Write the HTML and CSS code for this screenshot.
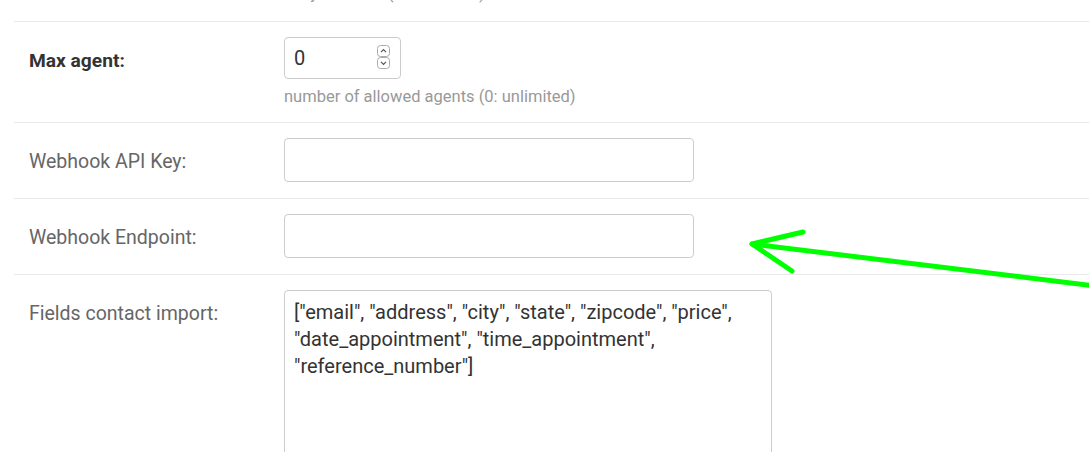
FILE: index.html
```html
<!DOCTYPE html>
<html>
<head>
<meta charset="utf-8">
<link rel="stylesheet" href="styles.css">
</head>
<body>
<div class="page">
  <div class="prev-help">daily call limit (0: unlimited)</div>
  <div class="form">
    <div class="row">
      <div class="label strong">Max agent:</div>
      <div class="field">
        <div class="num-wrap">
          <input class="input num" type="number" value="0">
          <svg class="spin" width="13" height="24" viewBox="0 0 13 24">
            <rect x="0.5" y="0.5" width="12" height="11" rx="3" fill="#fff" stroke="#aaa"/>
            <rect x="0.5" y="12.5" width="12" height="11" rx="3" fill="#fff" stroke="#aaa"/>
            <path d="M4 7.2 L6.5 4.7 L9 7.2" fill="none" stroke="#555" stroke-width="1.2"/>
            <path d="M4 16.8 L6.5 19.3 L9 16.8" fill="none" stroke="#555" stroke-width="1.2"/>
          </svg>
        </div>
        <div class="help">number of allowed agents (0: unlimited)</div>
      </div>
    </div>
    <div class="row">
      <div class="label">Webhook API Key:</div>
      <div class="field"><input class="input wide" type="text"></div>
    </div>
    <div class="row">
      <div class="label">Webhook Endpoint:</div>
      <div class="field"><input class="input wide" type="text"></div>
    </div>
    <div class="row">
      <div class="label">Fields contact import:</div>
      <div class="field"><textarea class="area">["email", "address", "city", "state", "zipcode", "price", "date_appointment", "time_appointment", "reference_number"]</textarea></div>
    </div>
  </div>
  <svg class="arrow" width="1089" height="452" viewBox="0 0 1089 452">
    <g fill="none" stroke="#00ff00" stroke-width="5" stroke-linecap="round" stroke-linejoin="round">
      <path d="M1095 286 L752 244"/>
      <path d="M803 232 L752 244 L792 271"/>
    </g>
  </svg>
</div>
</body>
</html>
```

FILE: styles.css
```css
* { box-sizing: border-box; }
html, body { margin: 0; padding: 0; background: #fff; overflow: hidden; }
body { font-family: Roboto, "Liberation Sans", sans-serif; }
.page { position: relative; width: 1089px; height: 452px; overflow: hidden; }
.prev-help {
  margin-left: 284px;
  margin-top: -16px;
  height: 37px;
  font-size: 16.5px;
  line-height: 20px;
  color: #999;
}
.form { margin-left: 14px; }
.row {
  display: flex;
  border-top: 1px solid #eaeaea;
  padding: 15px 0 16px 0;
}
.label {
  width: 270px;
  flex: none;
  padding-left: 15px;
  padding-top: 3px;
  font-size: 19.5px;
  line-height: 41px;
  color: #666;
}
.label.strong { font-weight: 700; font-size: 19.2px; color: #333; }
.field { flex: 1; }
.input {
  display: block;
  border: 1px solid #ccc;
  border-radius: 4px;
  height: 44px;
  padding: 0 9px;
  font-family: inherit;
  font-size: 20px;
  color: #333;
  outline: none;
  background: #fff;
}
.wide { width: 410px; }
.num-wrap { position: relative; width: 117px; }
.num { width: 117px; height: 42px; }
.num::-webkit-inner-spin-button, .num::-webkit-outer-spin-button { -webkit-appearance: none; margin: 0; }
.spin { position: absolute; left: 93px; top: 8px; }
.help {
  font-size: 16.5px;
  color: #999;
  margin-top: 8px;
  line-height: 20px;
  height: 19px;
}
.area {
  display: block;
  width: 488px;
  height: 200px;
  border: 1px solid #ccc;
  border-radius: 4px;
  padding: 8px 9px;
  font-family: inherit;
  font-size: 20px;
  line-height: 27px;
  color: #333;
  resize: none;
  outline: none;
}
.arrow { position: absolute; left: 0; top: 0; pointer-events: none; }
```
